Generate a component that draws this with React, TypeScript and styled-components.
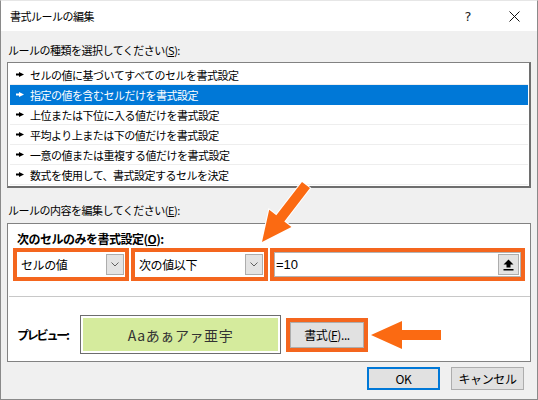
import React, { FC } from "react";
import styled, { createGlobalStyle } from "styled-components";

const GlobalStyle = createGlobalStyle`
	html, body {
		margin: 0;
		padding: 0;
		background: #fff;
	}
	body {
		font-family: "Noto Sans CJK JP", "Noto Sans", sans-serif;
		font-size: 11px;
		color: #000;
	}
`;

const ORANGE = "#f4661e";

// Styled components
const Dialog = styled.div`
	position: relative;
	box-sizing: border-box;
	width: 538px;
	height: 400px;
	border: 1px solid #8a8a8a;
	border-top-color: #e6e6e6;
	background: #f0f0f0;
	display: flex;
	flex-direction: column;
	overflow: hidden;
`;
const TitleBar = styled.div`
	height: 30px;
	flex: none;
	display: flex;
	align-items: center;
	background: #fff;
	padding-left: 9px;
`;
const Title = styled.span`
	flex: 1;
	font-size: 11px;
	letter-spacing: -0.5px;
`;
const TitleButton = styled.div`
	width: 46px;
	height: 30px;
	display: flex;
	align-items: center;
	justify-content: center;
	font-family: "DejaVu Sans", sans-serif;
	font-size: 13px;
	color: #222;
`;
const Body = styled.div`
	flex: 1;
	display: flex;
	flex-direction: column;
	padding: 0 6px;
`;
const Label = styled.div<{ $top: number }>`
	margin-top: ${(p) => p.$top}px;
	margin-left: 1px;
	height: 16px;
	line-height: 16px;
	letter-spacing: -0.5px;
`;
const Key = styled.span`
	text-decoration: underline;
	text-underline-offset: 1px;
`;
const ListBox = styled.div`
	margin-top: 4px;
	box-sizing: border-box;
	height: 126px;
	background: #fff;
	border: 1px solid #828282;
	border-right: 2px solid #6e6e6e;
	border-bottom: 2px solid #6e6e6e;
	padding: 2px 1px 1px 2px;
	display: flex;
	flex-direction: column;
`;
const Row = styled.div<{ $selected?: boolean }>`
	box-sizing: border-box;
	height: 20px;
	display: flex;
	align-items: center;
	gap: 6px;
	padding-left: 6px;
	letter-spacing: -0.5px;
	background: ${(p) => (p.$selected ? "#0078d7" : "#fff")};
	color: ${(p) => (p.$selected ? "#fff" : "#000")};
	border-bottom: 1px solid ${(p) => (p.$selected ? "#0078d7" : "#eeeeee")};
`;
const Panel = styled.div`
	margin-top: 5px;
	box-sizing: border-box;
	height: 139px;
	background: #fff;
	border: 1px solid #828282;
	padding: 7px 0 0;
	display: flex;
	flex-direction: column;
`;
const PanelHeading = styled.div`
	margin-left: 9px;
	height: 16px;
	line-height: 16px;
	font-size: 12px;
	font-weight: bold;
	letter-spacing: -0.5px;
`;
const CriteriaRow = styled.div`
	margin-top: 1px;
	padding-left: 5px;
	display: flex;
	gap: 2px;
`;
const Highlight = styled.div<{ $width: number; $height?: number }>`
	box-sizing: border-box;
	width: ${(p) => p.$width}px;
	height: ${(p) => p.$height ?? 33}px;
	border: 4px solid ${ORANGE};
	display: flex;
`;
const Combo = styled.div`
	flex: 1;
	background: #fff;
	display: flex;
	align-items: center;
	padding-left: 4px;
	padding-right: 1px;
	font-size: 12px;
	letter-spacing: -0.4px;
`;
const ComboText = styled.span`
	flex: 1;
`;
const SmallButton = styled.div<{ $w: number }>`
	box-sizing: border-box;
	width: ${(p) => p.$w}px;
	height: 21px;
	background: #e3e3e3;
	border: 1px solid #adadad;
	display: flex;
	align-items: center;
	justify-content: center;
`;
const Field = styled.div`
	flex: 1;
	background: #fff;
	border: 1px solid #b4b4b4;
	display: flex;
	align-items: center;
	padding-left: 1px;
	padding-right: 1px;
	font-family: "Liberation Sans", sans-serif;
	font-size: 13px;
`;
const FieldText = styled.span`
	flex: 1;
`;
const Divider = styled.div`
	margin: 15px 0 0 1px;
	height: 1px;
	background: #c8c8c8;
`;
const PreviewRow = styled.div`
	margin-top: 18px;
	padding-left: 9px;
	display: flex;
	align-items: center;
`;
const PreviewLabel = styled.div`
	width: 63px;
	font-size: 12px;
	font-weight: bold;
	letter-spacing: -2.2px;
`;
const PreviewBox = styled.div`
	box-sizing: border-box;
	width: 201px;
	height: 39px;
	border: 1px solid #6d6d6d;
	padding: 2px;
	background: #fff;
	display: flex;
`;
const PreviewFill = styled.div`
	flex: 1;
	background: #d5eb9d;
	display: flex;
	align-items: center;
	justify-content: center;
	font-size: 14px;
	letter-spacing: 0.6px;
	color: #333;
`;
const FormatWrap = styled.div`
	margin-left: 5px;
`;
const Button = styled.div<{ $primary?: boolean }>`
	box-sizing: border-box;
	width: 73px;
	height: 23px;
	flex: none;
	background: #e1e1e1;
	border: ${(p) => (p.$primary ? "2px solid #0078d7" : "1px solid #adadad")};
	display: flex;
	align-items: center;
	justify-content: center;
	font-size: 12px;
	letter-spacing: -0.4px;
`;
const FormatButton = styled(Button)`
	flex: 1;
	height: auto;
`;
const Footer = styled.div`
	margin-top: 5px;
	margin-right: 7px;
	display: flex;
	justify-content: flex-end;
	gap: 11px;
`;
const Overlay = styled.svg`
	position: absolute;
	left: 255px;
	top: 176px;
`;
const LeftArrow = styled.svg`
	margin-left: 2px;
	flex: none;
`;

const Bullet: FC<{ color: string }> = ({ color }) => (
	<svg width="8" height="7" viewBox="0 0 8 7">
		<rect x="0" y="2.5" width="4" height="2" fill={color} />
		<polygon points="3,1 8,3.5 3,6" fill={color} />
	</svg>
);

const Chevron: FC = () => (
	<svg width="8" height="5" viewBox="0 0 8 5">
		<polyline points="0.5,0.5 4,4 7.5,0.5" fill="none" stroke="#606060" strokeWidth="1" />
	</svg>
);

const UploadIcon: FC = () => (
	<svg width="11" height="12" viewBox="0 0 11 12">
		<polygon points="5.5,0.5 10.5,5.5 7.5,5.5 7.5,8.5 3.5,8.5 3.5,5.5 0.5,5.5" fill="#000" />
		<rect x="0.5" y="10" width="10" height="1.5" fill="#000" />
	</svg>
);

const rules = [
	"セルの値に基づいてすべてのセルを書式設定",
	"指定の値を含むセルだけを書式設定",
	"上位または下位に入る値だけを書式設定",
	"平均より上または下の値だけを書式設定",
	"一意の値または重複する値だけを書式設定",
	"数式を使用して、書式設定するセルを決定",
];

const App: FC = () => {
	return (
		<>
			<GlobalStyle />
			<Dialog>
				<TitleBar>
					<Title>書式ルールの編集</Title>
					<TitleButton>?</TitleButton>
					<TitleButton>
						<svg width="11" height="11" viewBox="0 0 11 11">
							<path d="M0.5 0.5 L10.5 10.5 M10.5 0.5 L0.5 10.5" stroke="#111" strokeWidth="1" />
						</svg>
					</TitleButton>
				</TitleBar>
				<Body>
					<Label $top={11}>
						ルールの種類を選択してください(<Key>S</Key>):
					</Label>
					<ListBox>
						{rules.map((r, i) => (
							<Row key={r} $selected={i === 1}>
								<Bullet color={i === 1 ? "#fff" : "#000"} />
								{r}
							</Row>
						))}
					</ListBox>
					<Label $top={14}>
						ルールの内容を編集してください(<Key>E</Key>):
					</Label>
					<Panel>
						<PanelHeading>
							次のセルのみを書式設定(<Key>O</Key>):
						</PanelHeading>
						<CriteriaRow>
							<Highlight $width={116}>
								<Combo>
									<ComboText>セルの値</ComboText>
									<SmallButton $w={18}>
										<Chevron />
									</SmallButton>
								</Combo>
							</Highlight>
							<Highlight $width={137}>
								<Combo>
									<ComboText>次の値以下</ComboText>
									<SmallButton $w={18}>
										<Chevron />
									</SmallButton>
								</Combo>
							</Highlight>
							<Highlight $width={255}>
								<Field>
									<FieldText>=10</FieldText>
									<SmallButton $w={21}>
										<UploadIcon />
									</SmallButton>
								</Field>
							</Highlight>
						</CriteriaRow>
						<Divider />
						<PreviewRow>
							<PreviewLabel>プレビュー:</PreviewLabel>
							<PreviewBox>
								<PreviewFill>Aaあぁアァ亜宇</PreviewFill>
							</PreviewBox>
							<FormatWrap>
								<Highlight $width={82} $height={34}>
									<FormatButton>
										書式(<Key>F</Key>)...
									</FormatButton>
								</Highlight>
							</FormatWrap>
							<LeftArrow width="72" height="32" viewBox="0 0 72 32">
								<polygon
									points="1,16 32,2 32,11 71,11 71,21 32,21 32,30"
									fill="#fb6a12"
									stroke="#fff"
									strokeWidth="1.5"
									paintOrder="stroke"
								/>
							</LeftArrow>
						</PreviewRow>
					</Panel>
					<Footer>
						<Button $primary>OK</Button>
						<Button>キャンセル</Button>
					</Footer>
				</Body>
				<Overlay width="62" height="70" viewBox="0 0 62 70">
					<polygon
						points="46,4.9 54,11.1 28.3,44.4 35.4,49.9 6,65 13.2,32.7 20.3,38.2"
						fill="#fb6a12"
						stroke="#fff"
						strokeWidth="2"
						strokeLinejoin="miter"
						paintOrder="stroke"
					/>
				</Overlay>
			</Dialog>
		</>
	);
};

export default App;
